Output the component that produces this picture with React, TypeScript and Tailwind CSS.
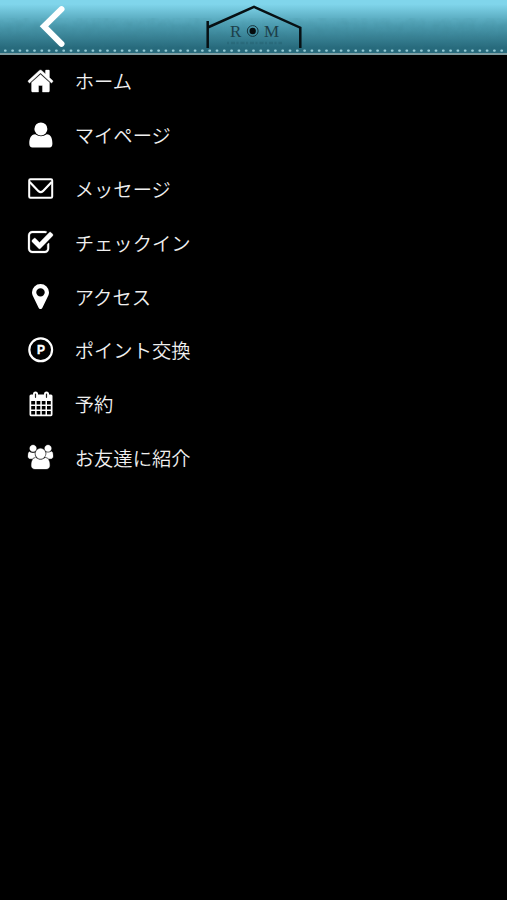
import React from "react";

type IconProps = {
  viewBox: string;
  className: string;
  children: React.ReactNode;
};

const Icon = ({ viewBox, className, children }: IconProps) => (
  <svg
    viewBox={viewBox}
    className={className}
    preserveAspectRatio="none"
    fill="currentColor"
    aria-hidden="true"
  >
    {children}
  </svg>
);

const HomeIcon = () => (
  <Icon viewBox="89 253 1614 1283" className="h-[22px] w-[25px] overflow-visible">
    <path
      stroke="currentColor"
      strokeWidth="24"
      d="M1472 992v480q0 26-19 45t-45 19h-384v-384h-256v384h-384q-26 0-45-19t-19-45v-480q0-1 .5-3t.5-3l575-474 575 474q1 2 1 6zm223-69l-62 74q-8 9-21 11h-3q-13 0-21-7l-692-577-692 577q-12 8-24 7-13-2-21-11l-62-74q-8-10-7-23.5t11-21.5l719-599q32-26 76-26t76 26l244 204v-195q0-14 9-23t23-9h192q14 0 23 9t9 23v408l219 182q10 8 11 21.5t-7 23.5z"
    />
  </Icon>
);

const UserIcon = () => (
  <Icon viewBox="0 0 24 26" className="h-[26px] w-[24px]">
    <path d="M6.2 12.3Q12 16.2 17.8 12.3C22 12.6 23.4 16.5 23.4 21.5Q23.4 25.5 20.5 25.5H3.5Q.3 25.5 .3 21.5C.3 16.5 2 12.6 6.2 12.3Z" />
    <circle cx="11.9" cy="6.9" r="6.5" />
  </Icon>
);

const MailIcon = () => (
  <Icon viewBox="0 0 26 21" className="h-[21px] w-[26px]">
    <rect x="1.2" y="1.3" width="23" height="18.4" rx="1.2" fill="none" stroke="currentColor" strokeWidth="2" />
    <path d="M1.700 4 10.500 13.200Q12.700 15 14.900 13.200L23.700 4" fill="none" stroke="currentColor" strokeWidth="2.2" />
  </Icon>
);

const CheckIcon = () => (
  <Icon viewBox="64 128 1664 1408" className="h-[22px] w-[25px] overflow-visible">
    <path
      stroke="currentColor"
      strokeWidth="16"
      d="M1472 930v318q0 119-84.500 203.500t-203.500 84.500h-832q-119 0-203.500-84.500t-84.500-203.500v-832q0-119 84.500-203.500t203.500-84.500h832q63 0 117 25 15 7 18 23 3 17-9 29l-49 49q-10 10-23 10-3 0-9-2-23-6-45-6h-832q-66 0-113 47t-47 113v832q0 66 47 113t113 47h832q66 0 113-47t47-113v-254q0-13 9-22l64-64q10-10 23-10 6 0 12 3 20 8 20 29zm231-489l-814 814q-24 24-57 24t-57-24l-430-430q-24-24-24-57t24-57l110-110q24-24 57-24t57 24l263 263 647-647q24-24 57-24t57 24l110 110q24 24 24 57t-24 57z"
    />
  </Icon>
);

const PinIcon = () => (
  <Icon viewBox="384 128 1024 1536" className="h-[25px] w-[17px]">
    <path d="M1152 640q0-106-75-181t-181-75-181 75-75 181 75 181 181 75 181-75 75-181zm256 0q0 109-33 179l-364 774q-16 33-47.500 52t-67.500 19-67.500-19-46.500-52l-365-774q-33-70-33-179 0-212 150-362t362-150 362 150 150 362z" />
  </Icon>
);

const PointIcon = () => (
  <Icon viewBox="0 0 26 26" className="h-[26px] w-[26px]">
    <circle cx="12.7" cy="12.8" r="11.4" fill="none" stroke="currentColor" strokeWidth="2.2" />
    <text
      x="13"
      y="17"
      textAnchor="middle"
      stroke="currentColor"
      strokeWidth=".4"
      className="font-['Liberation_Sans'] text-[12px] font-bold"
    >
      P
    </text>
  </Icon>
);

const CalendarIcon = () => (
  <Icon viewBox="0 0 24 26" className="h-[26px] w-[24px]">
    <path
      fillRule="evenodd"
      d="M2 3.500H22Q23.500 3.500 23.500 5V23.500Q23.500 25.300 22 25.300H2Q.5 25.300 .5 23.500V5Q.5 3.500 2 3.500ZM2.200 10V13.400H6.100V10ZM7.600 10V13.400H11.300V10ZM12.800 10V13.400H16.500V10ZM18 10V13.400H21.800V10ZM2.200 14.900V18.400H6.100V14.900ZM7.600 14.900V18.400H11.300V14.900ZM12.800 14.900V18.400H16.500V14.900ZM18 14.900V18.400H21.800V14.900ZM2.200 19.900V23.500H6.100V19.900ZM7.600 19.900V23.500H11.300V19.900ZM12.800 19.900V23.500H16.500V19.900ZM18 19.900V23.500H21.800V19.900Z"
    />
    <rect x="4" y=".4" width="5" height="7.600" rx="2.500" />
    <rect x="15" y=".4" width="5" height="7.600" rx="2.500" />
    <path d="M6.500 3V6.300M17.500 3V6.300" stroke="#222" strokeWidth="1.200" strokeLinecap="round" />
  </Icon>
);

const GroupIcon = () => (
  <Icon viewBox="58 0 1926 1792" className="h-[24px] w-[25px] overflow-visible">
    <path
      stroke="currentColor"
      strokeWidth="24"
      d="M657 896q-162 5-265 128h-134q-82 0-138-40.500t-62-118.500q0-353 124-353 6 0 43.500 21t97.500 42.500 119 21.500q67 0 133-23-5 37-5 66 0 159 90 287zm1071 637q0 120-73 189.500t-194 69.500h-874q-121 0-194-69.500t-73-189.500q0-53 3.500-103.500t14-109 26.500-108.500 43-97.500 62-81 85.500-53.500 111.500-20q10 0 43 21.500t73 48 107 48 135 21.500 135-21.500 107-48 73-48 43-21.500q61 0 111.500 20t85.500 53.500 62 81 43 97.500 26.500 108.500 14 109 3.500 103.500zm-1024-1277q0 106-75 181t-181 75-181-75-75-181 75-181 181-75 181 75 75 181zm704 384q0 159-112.500 271.500t-271.500 112.500-271.500-112.500-112.500-271.500 112.500-271.500 271.500-112.500 271.500 112.500 112.500 271.500zm576 225q0 78-62 118.500t-138 40.500h-134q-103-123-265-128 90-128 90-287 0-29-5-66 66 23 133 23 59 0 119-21.500t97.500-42.500 43.500-21q124 0 124 353zm-128-609q0 106-75 181t-181 75-181-75-75-181 75-181 181-75 181 75 75 181z"
    />
  </Icon>
);

const menu = [
  { label: "ホーム", icon: <HomeIcon /> },
  { label: "マイページ", icon: <UserIcon /> },
  { label: "メッセージ", icon: <MailIcon /> },
  { label: "チェックイン", icon: <CheckIcon /> },
  { label: "アクセス", icon: <PinIcon /> },
  { label: "ポイント交換", icon: <PointIcon /> },
  { label: "予約", icon: <CalendarIcon /> },
  { label: "お友達に紹介", icon: <GroupIcon /> },
];

const Logo = () => (
  <svg viewBox="0 0 98 46" className="h-[46px] w-[98px]" role="img" aria-label="ROM">
    <path
      d="M2.700 18V45M2.700 24.500 49 3.800 95.300 24.700V45"
      fill="none"
      stroke="#071013"
      strokeWidth="2.500"
    />
    <g className="font-['Liberation_Serif'] text-[17px]" fill="#1d3f49">
      <text x="25" y="33.500">R</text>
      <text x="59" y="33.500">M</text>
    </g>
    <circle cx="47.700" cy="28" r="5.400" fill="none" stroke="#16343d" strokeWidth="1" />
    <circle cx="47.700" cy="28" r="3.200" fill="#050b0d" />
    <path d="M22 40H77" stroke="#1d5361" strokeWidth="2.500" strokeDasharray="2 2 4 1.500" opacity=".3" />
  </svg>
);

// worn fabric look with a stitched seam along the bottom
const HeaderTexture = () => (
  <svg className="absolute inset-0 h-full w-full" aria-hidden="true">
    <filter id="fabric" x="0" y="0" width="100%" height="100%">
      <feTurbulence type="fractalNoise" baseFrequency="0.12" numOctaves="3" seed="4" />
      <feColorMatrix values="0 0 0 0 0.04  0 0 0 0 0.2  0 0 0 0 0.25  0.9 0 0 0 -0.3" />
    </filter>
    <rect y="18" width="100%" height="35" filter="url(#fabric)" opacity=".28" />
    <line
      x1="5"
      x2="507"
      y1="50.700"
      y2="50.700"
      stroke="#94cbd6"
      strokeWidth="2.200"
      strokeLinecap="round"
      strokeDasharray="0.600 6.700"
    />
  </svg>
);

const Header = () => (
  <header className="relative flex h-[55px] border-b-2 border-[#7f9da1] bg-linear-to-b from-[#80d5eb] from-8% via-[#4c9cb0] via-48% to-[#276a7c] to-90%">
    <HeaderTexture />
    <button type="button" className="relative ml-[38px] mt-[5px] h-[44px] w-[28px] text-white" aria-label="戻る">
      <svg viewBox="0 0 28 44" className="h-[44px] w-[28px]">
        <path
          d="M23.500 4.200 6 21.300 23.500 38.800"
          fill="none"
          stroke="currentColor"
          strokeWidth="6"
          strokeLinecap="round"
          strokeLinejoin="miter"
        />
      </svg>
    </button>
    <div className="relative ml-[139px] mt-[3px]">
      <Logo />
    </div>
  </header>
);

const App = () => {
  return (
    <div className="min-h-screen bg-black font-['Noto_Sans_CJK_JP',sans-serif] text-white">
      <Header />
      <nav className="-mt-px">
        <ul className="grid auto-rows-[53.8px]">
          {menu.map((item) => (
            <li key={item.label} className="flex items-center">
              <span className="ml-[27px] flex w-[27px] shrink-0 justify-center">{item.icon}</span>
              <span className="ml-[20.8px] pt-[2.2px] text-[19.3px] leading-none font-[350] text-[#f0f0f0]">
                {item.label}
              </span>
            </li>
          ))}
        </ul>
      </nav>
    </div>
  );
};

export default App;
